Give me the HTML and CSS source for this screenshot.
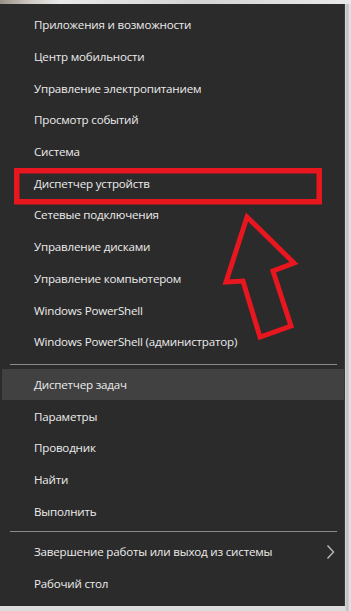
FILE: index.html
```html
<!DOCTYPE html>
<html lang="ru">
<head>
<meta charset="utf-8">
<title>Меню Win+X</title>
<link rel="stylesheet" href="styles.css">
</head>
<body>
<div class="screen">
  <div class="top-strip"></div>
  <div class="menu">
    <div class="group">
      <div class="item">Приложения и возможности</div>
      <div class="item">Центр мобильности</div>
      <div class="item">Управление электропитанием</div>
      <div class="item">Просмотр событий</div>
      <div class="item">Система</div>
      <div class="item">Диспетчер устройств</div>
      <div class="item">Сетевые подключения</div>
      <div class="item">Управление дисками</div>
      <div class="item">Управление компьютером</div>
      <div class="item">Windows PowerShell</div>
      <div class="item">Windows PowerShell (администратор)</div>
    </div>
    <div class="sep sep-1"></div>
    <div class="group">
      <div class="item item-hover">Диспетчер задач</div>
      <div class="item">Параметры</div>
      <div class="item">Проводник</div>
      <div class="item">Найти</div>
      <div class="item">Выполнить</div>
    </div>
    <div class="sep sep-2"></div>
    <div class="group">
      <div class="item item-sub">
        <span>Завершение работы или выход из системы</span>
        <svg class="chev" width="9" height="16" viewBox="0 0 9 16"><path d="M1.5 1.5 L7.5 8 L1.5 14.5" fill="none" stroke="#b9b9b9" stroke-width="1.4"/></svg>
      </div>
      <div class="item">Рабочий стол</div>
    </div>
  </div>
  <svg class="annot" width="351" height="611" viewBox="0 0 351 611">
    <rect x="16.75" y="170.75" width="302.5" height="31" fill="none" stroke="#e8161f" stroke-width="5.5"/>
    <polygon points="247,217 294,263 273,271 291,326 260,337 243,281 226,282" fill="none" stroke="#e8161f" stroke-width="5" stroke-linejoin="miter"/>
  </svg>
</div>
</body>
</html>
```
FILE: styles.css
```css
html, body {
  margin: 0;
  padding: 0;
}
body {
  background: #d8d8d8;
  font-family: "Open Sans", "Noto Sans", "DejaVu Sans", sans-serif;
  width: 351px;
  height: 611px;
  overflow: hidden;
}
.screen {
  position: relative;
  width: 351px;
  height: 611px;
  background: linear-gradient(to right, #dcdcdc 0, #dcdcdc 345px, #c9c9c9 346px, #bdbdbd 348px, #e0e0e0 349px);
}
.top-strip {
  height: 4px;
  background: linear-gradient(to right, #9a9186 0, #cfcac3 30px, #e9e9e9 60px, #d4d4d4 200px, #e9e9e9 351px);
}
.menu {
  width: 345px;
  height: 602px;
  box-sizing: border-box;
  background: #2b2b2b;
  border-right: 1px solid #3a3a3a;
  padding: 5px 0 0 2px;
  color: #ebebeb;
  font-size: 11.6px;
  letter-spacing: -0.2px;
}
.group {
  display: flex;
  flex-direction: column;
}
.item {
  height: 31.7px;
  display: flex;
  align-items: center;
  padding-left: 32px;
  white-space: nowrap;
}
.item-hover {
  background: #414141;
}
.item-sub {
  justify-content: space-between;
  padding-right: 9px;
}
.chev {
  display: block;
}
.sep {
  height: 1px;
  background: #8a8a8a;
  margin-left: 8px;
  margin-right: 7px;
}
.sep-1 {
  margin-top: 6px;
  margin-bottom: 4px;
}
.sep-2 {
  margin-top: 4px;
  margin-bottom: 4px;
}
.annot {
  position: absolute;
  left: 0;
  top: 0;
  pointer-events: none;
}
```
